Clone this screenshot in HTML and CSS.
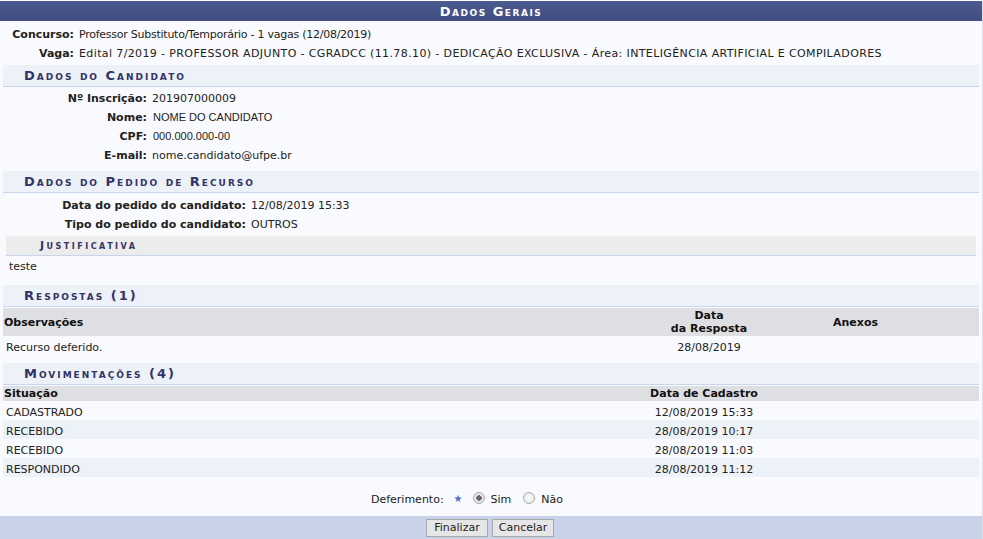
FILE: index.html
```html
<!DOCTYPE html>
<html lang="pt-BR">
<head>
  <meta charset="UTF-8" />
  <title>Dados Gerais</title>
  <link rel="stylesheet" href="styles.css">
</head>
<body>
  <div class="visualizacao">
    <div class="caption">Dados Gerais</div>

    <div class="campos campos-topo">
      <div class="linha"><span class="rotulo">Concurso:</span><span class="estreito">Professor Substituto/Temporário - 1 vagas (12/08/2019)</span></div>
      <div class="linha"><span class="rotulo">Vaga:</span><span class="largo">Edital 7/2019 - PROFESSOR ADJUNTO - CGRADCC (11.78.10) - DEDICAÇÃO EXCLUSIVA - Área: INTELIGÊNCIA ARTIFICIAL E COMPILADORES</span></div>
    </div>

    <div class="subformulario">Dados do Candidato</div>
    <div class="campos campos-candidato">
      <div class="linha"><span class="rotulo">Nº Inscrição:</span><span>201907000009</span></div>
      <div class="linha"><span class="rotulo">Nome:</span><span class="valor-alt">NOME DO CANDIDATO</span></div>
      <div class="linha"><span class="rotulo">CPF:</span><span class="valor-alt">000.000.000-00</span></div>
      <div class="linha"><span class="rotulo">E-mail:</span><span>nome.candidato@ufpe.br</span></div>
    </div>

    <div class="subformulario">Dados do Pedido de Recurso</div>
    <div class="campos campos-pedido">
      <div class="linha"><span class="rotulo">Data do pedido do candidato:</span><span>12/08/2019 15:33</span></div>
      <div class="linha"><span class="rotulo">Tipo do pedido do candidato:</span><span>OUTROS</span></div>
    </div>

    <div class="subtitulo">Justificativa</div>
    <div class="texto-livre">teste</div>

    <div class="subformulario">Respostas (1)</div>
    <div class="listagem listagem-respostas">
      <div class="cabecalho">
        <div class="esq">Observações</div>
        <div class="centro">Data<br>da Resposta</div>
        <div class="centro">Anexos</div>
        <div></div>
      </div>
      <div class="registro">
        <div>Recurso deferido.</div>
        <div class="centro">28/08/2019</div>
        <div></div>
        <div></div>
      </div>
    </div>

    <div class="subformulario">Movimentações (4)</div>
    <div class="listagem listagem-mov">
      <div class="cabecalho">
        <div class="esq">Situação</div>
        <div class="centro">Data de Cadastro</div>
        <div></div>
      </div>
      <div class="registro"><div>CADASTRADO</div><div class="centro">12/08/2019 15:33</div><div></div></div>
      <div class="registro par"><div>RECEBIDO</div><div class="centro">28/08/2019 10:17</div><div></div></div>
      <div class="registro"><div>RECEBIDO</div><div class="centro">28/08/2019 11:03</div><div></div></div>
      <div class="registro par"><div>RESPONDIDO</div><div class="centro">28/08/2019 11:12</div><div></div></div>
    </div>

    <div class="deferimento">
      <span>Deferimento:</span>
      <span class="obrigatorio">&#9733;</span>
      <label><input type="radio" name="deferido" checked> Sim</label>
      <label><input type="radio" name="deferido"> Não</label>
    </div>

    <div class="rodape">
      <button>Finalizar</button>
      <button>Cancelar</button>
    </div>
  </div>
</body>
</html>
```

FILE: styles.css
```css
body {
  margin: 0;
  padding: 0;
  background: #fff;
  font-family: "DejaVu Sans", Verdana, sans-serif;
  font-size: 11px;
  color: #222;
}
.visualizacao {
  width: 982px;
  margin-top: 1px;
  background: #f9fafd;
  border-right: 1px solid #dcdde6;
}
.caption {
  height: 20px;
  line-height: 21px;
  background: linear-gradient(#4c5b90, #3f4d80);
  color: #fff;
  text-align: center;
  font-weight: bold;
  font-variant: small-caps;
  letter-spacing: 1.5px;
  font-size: 13px;
}
.campos {
  display: flex;
  flex-direction: column;
}
.campos-topo {
  padding: 3px 0 3px;
}
.campos-candidato {
  padding: 1px 0 7px;
}
.campos-pedido {
  padding: 2px 0 3px;
}
.linha {
  display: flex;
  height: 19px;
  line-height: 21px;
  gap: 5px;
}
.rotulo {
  font-weight: bold;
  text-align: right;
  flex-shrink: 0;
}
.campos-topo .rotulo { width: 74px; }
.campos-candidato .rotulo { width: 147px; }
.campos-pedido .rotulo { width: 246px; }
.estreito { letter-spacing: -0.25px; }
.largo { letter-spacing: 0.38px; }
.valor-alt {
  font-family: "Liberation Sans", Arial, sans-serif;
  padding-left: 1px;
}

.subformulario {
  margin: 0 3px;
  height: 21px;
  line-height: 22px;
  padding-left: 21px;
  background: #edf1f8;
  border-bottom: 1px solid #c8d5ec;
  color: #333366;
  font-weight: bold;
  font-variant: small-caps;
  letter-spacing: 2px;
  font-size: 13px;
}
.subtitulo {
  margin: 0 6px;
  height: 19px;
  line-height: 20px;
  padding-left: 34px;
  background: #ececec;
  border-bottom: 1px solid #c8d5ec;
  color: #333366;
  font-weight: bold;
  font-variant: small-caps;
  letter-spacing: 2.5px;
  font-size: 11px;
}
.texto-livre {
  height: 19px;
  line-height: 21px;
  padding-left: 9px;
  margin-bottom: 10px;
}
.listagem {
  margin: 1px 3px 0;
}
.cabecalho, .registro {
  display: grid;
}
.listagem-respostas .cabecalho,
.listagem-respostas .registro {
  grid-template-columns: 637px 138px 155px 1fr;
}
.listagem-mov .cabecalho,
.listagem-mov .registro {
  grid-template-columns: 601px 200px 1fr;
}
.cabecalho {
  background: #dedfe3;
  font-weight: bold;
  line-height: 13px;
  padding: 1px 0;
  align-items: center;
  color: #111;
}
.cabecalho .esq {
  padding-left: 1px;
}
.registro {
  height: 19px;
  line-height: 23px;
}
.listagem-respostas .registro {
  height: 21px;
  line-height: 24px;
}
.registro > div:first-child {
  padding-left: 3px;
}
.registro.par {
  background: #edf1f8;
}
.centro {
  text-align: center;
}
.listagem-respostas {
  margin-bottom: 6px;
}
.deferimento {
  height: 39px;
  display: flex;
  justify-content: center;
  align-items: center;
  gap: 6px;
  padding-right: 42px;
  padding-top: 5px;
  box-sizing: border-box;
}
.obrigatorio {
  color: #4a6fd0;
  font-size: 10px;
  margin: 0 4px 2px;
}
.deferimento label {
  display: flex;
  align-items: center;
  gap: 4px;
  margin-right: 6px;
}
.deferimento input {
  appearance: none;
  width: 12px;
  height: 12px;
  margin: 0 2px 2px 0;
  border: 1px solid #a8a8a8;
  border-radius: 50%;
  background: radial-gradient(#fdfdfd, #e4e4e4);
}
.deferimento input:checked {
  background: radial-gradient(circle, #666 0 2.5px, #e8e8e8 3px);
}
.rodape {
  background: #c8d3ea;
  height: 23px;
  display: flex;
  justify-content: center;
  align-items: center;
  gap: 4px;
  padding-right: 2px;
}
button {
  font-family: "DejaVu Sans", Verdana, sans-serif;
  font-size: 11px;
  color: #222;
  background: #e6e6e6;
  border: 1px solid #a9a9a9;
  padding: 1px 0;
  width: 62px;
  height: 18px;
  line-height: 14px;
}
```
